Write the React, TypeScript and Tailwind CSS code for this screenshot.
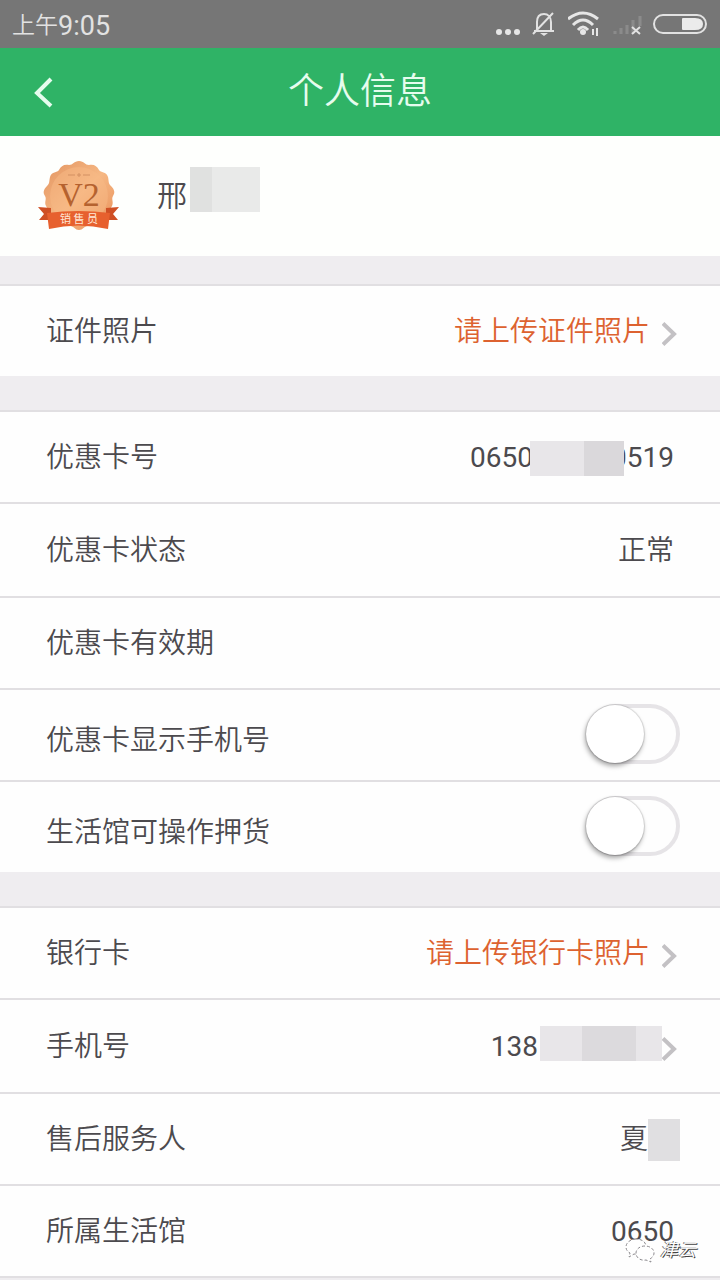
import React from 'react';

const Chevron = () => (
  <svg className="w-4 h-6 ml-3 -mr-1 mt-1 shrink-0" viewBox="0 0 16 24" fill="none" stroke="#c3c1c4" strokeWidth="4">
    <path d="M1 1.5L12 12L1 22.5" />
  </svg>
);

const Row = ({ label, children }: { label: string; children?: React.ReactNode }) => (
  <li className="flex items-center justify-between h-[92px] nth-2:h-[94px] px-[46px] pt-[2px] border-t-2 border-[#e1dfe2] bg-[#fefefe]">
    <span>{label}</span>
    <div className="flex items-center">{children}</div>
  </li>
);

const SwitchRow = ({ id, label }: { id: string; label: string }) => (
  <li className="flex items-center justify-between h-[92px] pl-[46px] pr-10 border-t-2 border-[#e1dfe2] bg-[#fefefe]">
    <label htmlFor={id} className="pt-3">
      {label}
    </label>
    <input
      id={id}
      type="checkbox"
      role="switch"
      className="appearance-none w-[94px] h-[60px] mb-[2px] rounded-full border-4 border-[#e6e4e7] bg-[#fefefe] before:block before:size-[58px] before:-ml-1 before:-mt-[3px] before:rounded-full before:bg-white before:shadow-[-1px_3px_5px_rgba(0,0,0,0.35),0_0_1px_1px_rgba(0,0,0,0.12)] checked:bg-[#2fb366] checked:before:ml-8"
    />
  </li>
);

const UploadLink = ({ children }: { children: React.ReactNode }) => (
  <a href="#" className="flex items-center text-[#dd6230]">
    {children}
    <Chevron />
  </a>
);

const StatusBar = () => (
  <div className="flex items-center justify-between h-12 px-3 bg-[#767676] text-[#e2e2e2]">
    <div className="flex items-center pt-1">
      <span className="text-[23px]">上午</span>
      <span className="text-[27px] font-normal">9:05</span>
    </div>
    <div className="flex items-center">
      <svg className="w-6 h-12" viewBox="0 0 24 48" fill="#e6e6e6">
        <circle cx="3" cy="32" r="3" />
        <circle cx="12" cy="32" r="3" />
        <circle cx="21" cy="32" r="3" />
      </svg>
      <svg className="w-6 h-12 ml-3" viewBox="0 0 24 48" fill="none" stroke="#e2e2e2" strokeWidth="2">
        <path d="M2 31H22M5 31V22C5 16 8 14 12 14C16 14 19 17 19 22V31M1 34L21 13" />
        <path d="M8 33H16L12 36Z" fill="#e2e2e2" stroke="none" />
      </svg>
      <svg className="w-8 h-12 ml-3" viewBox="0 0 32 48" fill="none" stroke="#e6e6e6" strokeWidth="3">
        <path d="M0 19Q15 7 30 19M5 25Q15 15 25 25M10 30Q15 24 20 30" />
        <circle cx="15" cy="32" r="3" fill="#e6e6e6" stroke="none" />
        <path d="M25 29V35M29 28V36" strokeWidth="2" />
      </svg>
      <svg className="w-8 h-12 ml-3" viewBox="0 0 32 48" fill="none" stroke="#8b8b8b" strokeWidth="3">
        <path d="M3 31V34M9 28V34M15 25V34M21 20V34M28 16V26" />
        <path d="M20 27L28 34M28 27L20 34" stroke="#e2e2e2" strokeWidth="2" />
      </svg>
      <svg className="w-14 h-12 ml-2" viewBox="0 0 56 48">
        <rect x="2" y="15" width="52" height="18" rx="9" fill="none" stroke="#e2e2e2" strokeWidth="2" />
        <path d="M31 18H43Q51 18 51 24Q51 30 43 30H31Q30 30 30 29V19Q30 18 31 18Z" fill="#ebebeb" />
      </svg>
    </div>
  </div>
);

const Badge = () => (
  <svg className="w-[84px] h-[72px]" viewBox="0 0 84 72">
    <defs>
      <linearGradient id="seal" x1="0" y1="0" x2="1" y2="1">
        <stop offset="0" stopColor="#e2935f" />
        <stop offset="0.5" stopColor="#f6b884" />
        <stop offset="1" stopColor="#e88f58" />
      </linearGradient>
    </defs>
    <path
      d="M42 1C47 1 48 5 52 5C57 4 60 6 62 10C64 13 69 11 71 17C72 21 71 23 74 26C78 30 78 33 76 36C74 39 77 42 75 46C73 50 71 50 70 54C69 59 66 61 61 61C57 61 56 65 51 66C47 66 46 70 42 70C38 70 37 66 33 66C28 65 27 61 23 61C18 61 15 59 14 54C13 50 11 50 9 46C7 42 10 39 8 36C6 33 6 30 10 26C13 23 12 21 13 17C15 11 20 13 22 10C24 6 27 4 32 5C36 5 37 1 42 1Z"
      fill="url(#seal)"
    />
    <circle cx="42" cy="36" r="29" fill="#f8b985" fillOpacity="0.5" />
    <path d="M31 15H38M46 15H53M42 13V17M40 15H44" stroke="#d39062" strokeWidth="1" />
    <text x="42" y="46" textAnchor="middle" fill="#b5622f" fontFamily="Liberation Serif, serif" fontSize="34">
      V2
    </text>
    <path d="M1 47L14 48V60L2 60L7 54ZM82 47L69 48V60L81 60L76 54Z" fill="#cf4f24" />
    <path d="M10 53Q41 49 73 53L71 69Q41 62 12 69Z" fill="#e7602e" />
    <text
      x="42"
      y="63"
      textAnchor="middle"
      fill="#ffe9d8"
      fontFamily="Noto Sans CJK SC, sans-serif"
      fontSize="11"
      fontWeight="400"
    >
      销 售 员
    </text>
  </svg>
);

const Watermark = () => (
  <div className="absolute right-6 bottom-4 flex items-center gap-1">
    <svg className="w-8 h-7" viewBox="0 0 32 28" fill="#ffffff" stroke="#8a888c" strokeWidth="1" strokeDasharray="3 2">
      <path d="M12 3C6 3 2 7 2 11C2 14 4 16 6 17L5 21L10 18C17 19 22 16 22 11C22 6 18 3 12 3Z" />
      <path d="M21 10C15 10 12 14 12 17C12 22 17 25 22 24L27 26L26 23C29 21 30 19 30 17C30 13 26 10 21 10Z" />
    </svg>
    <span className="text-[18px] leading-6 font-normal italic text-white [text-shadow:1px_1px_0_#444,-1px_0_0_#666]">
      津云
    </span>
  </div>
);

export default function App() {
  return (
    <div className="relative min-h-screen bg-[#efedf0] text-[28px] leading-10 font-[350] text-[#4c4a4e] font-[Roboto,'Noto_Sans_CJK_SC',sans-serif]">
      <StatusBar />
      <header className="grid grid-cols-[88px_1fr_88px] items-center h-[88px] bg-[#2fb366] text-[#e6fcee]">
        <button type="button" aria-label="返回" className="flex items-center justify-center h-full">
          <svg className="w-5 h-8" viewBox="0 0 20 32" fill="none" stroke="currentColor" strokeWidth="4">
            <path d="M17 3L3 17L17 30" />
          </svg>
        </button>
        <h1 className="text-center text-[36px]">个人信息</h1>
      </header>

      <section className="flex items-center h-[120px] pl-[37px] bg-[#fefffd]">
        <Badge />
        <span className="ml-9 text-[30px]">邢</span>
        <span className="flex w-[70px] h-[45px] ml-[3px] mb-[14px] bg-[#e9eae9]">
          <span className="w-[22px] bg-[#e0e1e0]" />
        </span>
      </section>

      <ul className="mt-7">
        <Row label="证件照片">
          <UploadLink>请上传证件照片</UploadLink>
        </Row>
      </ul>

      <ul className="mt-[34px]">
        <Row label="优惠卡号">
          <span className="font-normal">0650</span>
          <span className="relative flex justify-end w-[94px] h-[35px] -ml-[3px] -mr-[13px] bg-[#e8e6e9]">
            <span className="w-10 bg-[#dad8db]" />
          </span>
          <span className="font-normal">0519</span>
        </Row>
        <Row label="优惠卡状态">正常</Row>
        <Row label="优惠卡有效期" />
        <SwitchRow id="show-phone" label="优惠卡显示手机号" />
        <SwitchRow id="allow-pledge" label="生活馆可操作押货" />
      </ul>

      <ul className="mt-[34px] border-b-2 border-[#e1dfe2]">
        <Row label="银行卡">
          <UploadLink>请上传银行卡照片</UploadLink>
        </Row>
        <Row label="手机号">
          <a href="#" className="flex items-center">
            <span className="font-normal">138</span>
            <span className="flex w-[122px] h-[35px] ml-[2px] -mr-3 mb-2 pl-[42px] bg-[#e8e6e9]">
              <span className="w-[54px] bg-[#dcdadd]" />
            </span>
            <Chevron />
          </a>
        </Row>
        <Row label="售后服务人">
          夏
          <span className="w-8 h-[42px] -mr-[6px] bg-[#e0dfe1]" />
        </Row>
        <Row label="所属生活馆">
          <span className="font-normal">0650</span>
        </Row>
      </ul>
      <Watermark />
    </div>
  );
}
